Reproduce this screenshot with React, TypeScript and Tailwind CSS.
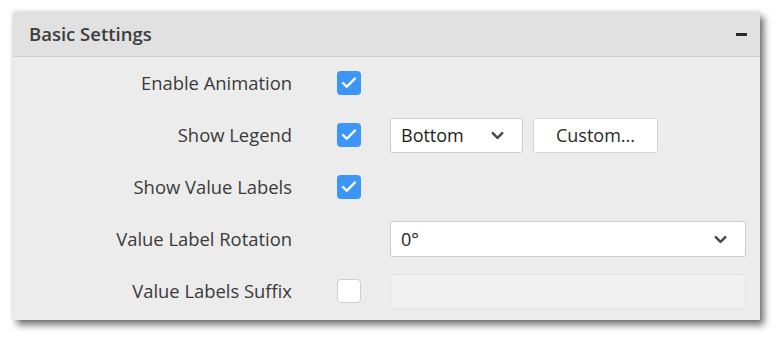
import { Check, ChevronDown } from "lucide-react";

const Box = ({ checked }: { checked: boolean }) => (
	<div
		className={`w-6 h-6 rounded-[4px] flex items-center justify-center ${
			checked ? "bg-[#3b96f7]" : "bg-white border border-[#cfcfcf]"
		}`}
	>
		{checked && <Check size={18} strokeWidth={3.2} className="text-white" />}
	</div>
);

const Select = ({ value, className }: { value: string; className: string }) => (
	<div
		className={`bg-white border border-[#cdcdcd] rounded-[3px] flex items-center justify-between pl-[10px] pr-[15px] text-[18px] text-[#1e1e1e] ${className}`}
	>
		<span>{value}</span>
		<ChevronDown size={19} strokeWidth={3.2} className="text-[#4a4a4a]" />
	</div>
);

const rows = [
	{ label: "Enable Animation", checkbox: true, checked: true },
	{ label: "Show Legend", checkbox: true, checked: true, extra: "legend" },
	{ label: "Show Value Labels", checkbox: true, checked: true },
	{ label: "Value Label Rotation", checkbox: false, extra: "rotation" },
	{ label: "Value Labels Suffix", checkbox: true, checked: false, extra: "suffix" },
];

export default function App() {
	return (
		<div
			className="w-[780px] h-[340px] bg-white pl-[13px] pt-[12px]"
			style={{ fontFamily: '"Open Sans", "Noto Sans", sans-serif' }}
		>
			<div className="w-[747px] h-[308px] bg-[#ececec] shadow-[4px_5px_7px_rgba(0,0,0,0.55),0_-1px_4px_rgba(0,0,0,0.12)]">
				{/* Header */}
				<div className="h-[45px] bg-[#e1e1e1] border-b border-[#cfcfcf] flex items-center justify-between pl-4 pr-[13px]">
					<span className="text-[18.5px] font-semibold text-[#3c3c3c]">Basic Settings</span>
					<div className="w-[11px] h-[3px] bg-[#2a2a2a]" />
				</div>

				{/* Rows */}
				<div>
					{rows.map((row) => (
						<div key={row.label} className="h-[52px] flex items-center">
							<div className="w-[279px] text-right text-[18.4px] text-[#3a3a3a]">{row.label}</div>
							<div className="w-[24px] ml-[45px]">
								{row.checkbox && <Box checked={!!row.checked} />}
							</div>
							<div className="ml-[29px] flex items-center gap-[10px]">
								{row.extra === "legend" && (
									<>
										<Select value="Bottom" className="w-[133px] h-[35px]" />
										<div className="w-[125px] h-[35px] bg-white border border-[#d4d4d4] rounded-[3px] flex items-center justify-center text-[18px] text-[#2a2a2a]">
											Custom...
										</div>
									</>
								)}
								{row.extra === "rotation" && <Select value="0°" className="w-[356px] h-[36px]" />}
								{row.extra === "suffix" && (
									<div className="w-[356px] h-[35px] bg-[#f1f1f1] border border-[#e3e3e3] rounded-[3px]" />
								)}
							</div>
						</div>
					))}
				</div>
			</div>
		</div>
	);
}
